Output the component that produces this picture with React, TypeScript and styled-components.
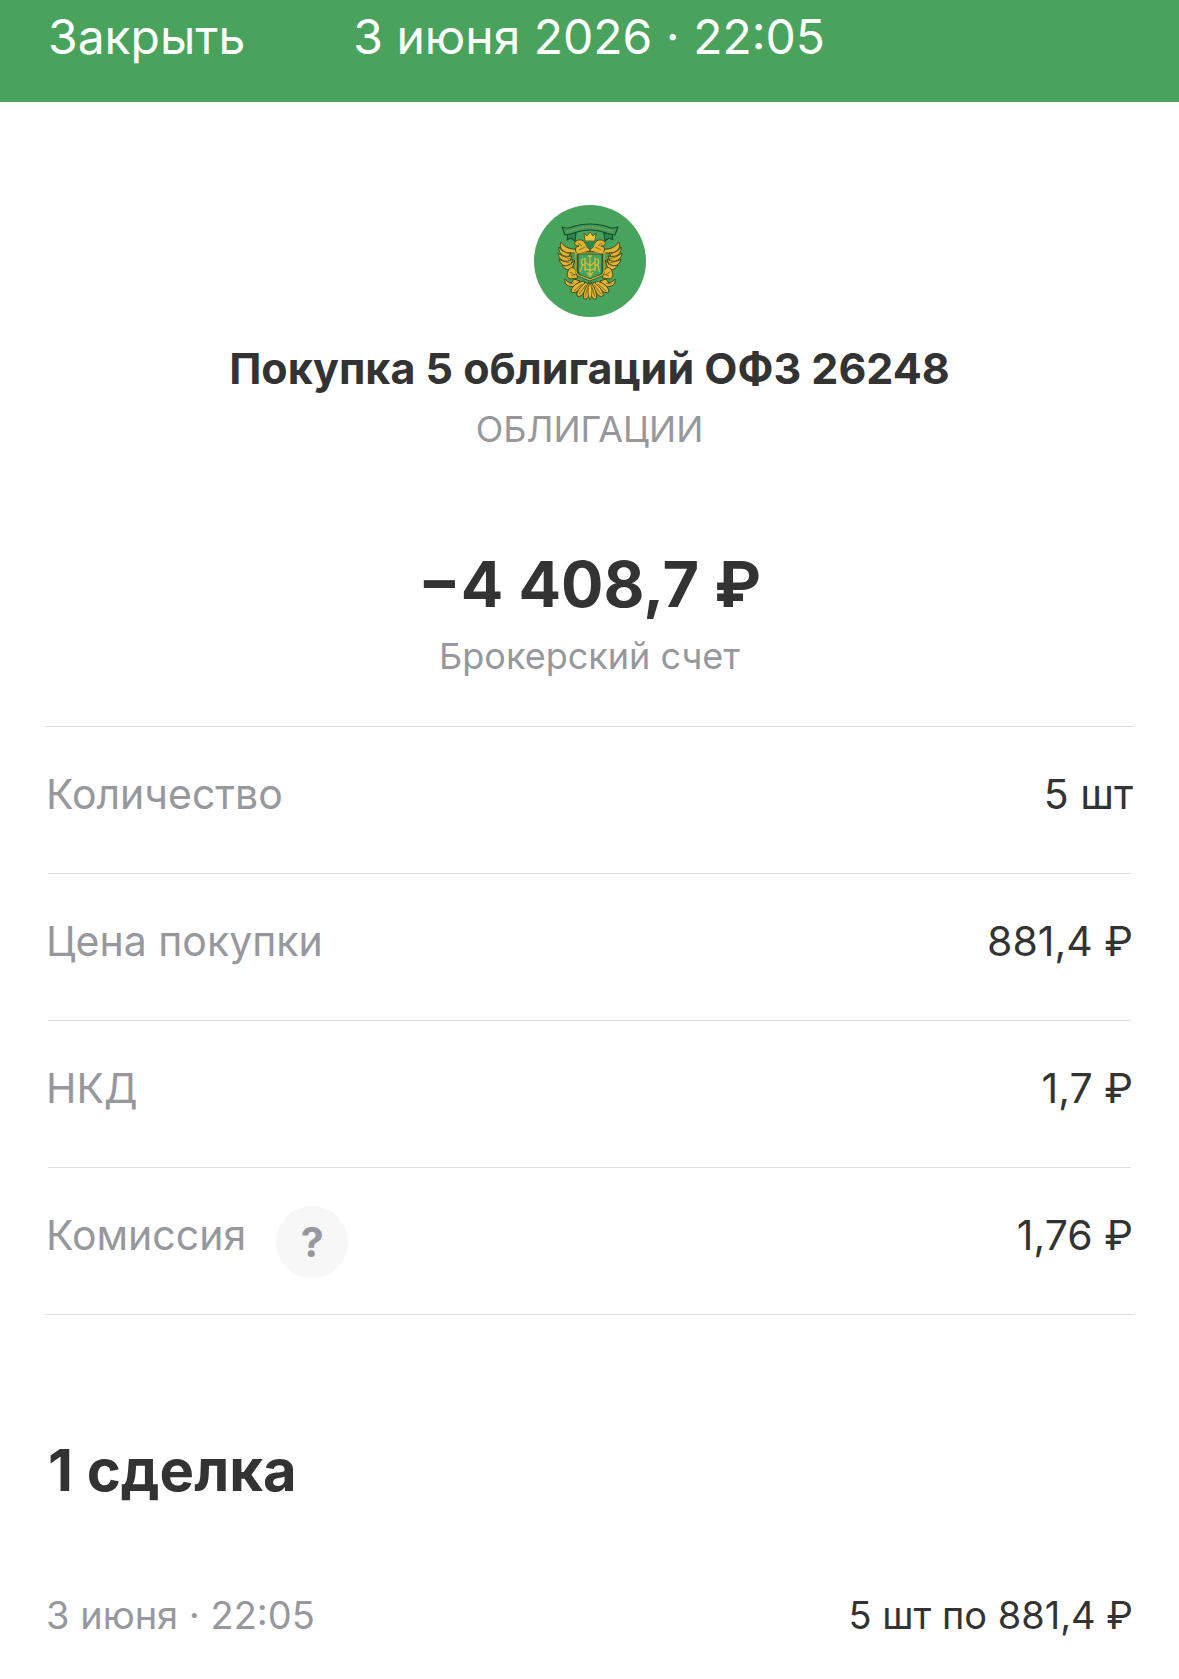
import styled, { createGlobalStyle } from "styled-components";

const details = [
  { name: "Количество", value: "5 шт" },
  { name: "Цена покупки", value: "881,4 ₽" },
  { name: "НКД", value: "1,7 ₽" },
  { name: "Комиссия", value: "1,76 ₽", help: true },
];

// left half of the eagle, mirrored for the right one
const EagleHalf = () => (
  <>
    <g fill="#e3b433" stroke="#3f4a1c" strokeWidth="1" strokeLinejoin="round">
      <path d="M27 37C25 42 28 46 32 48L43 48L43 44C37 45 30 42 27 37Z" />
      <path d="M25 42C24 47 28 51 34 53L37 48C32 48 27 46 25 42Z" />
      <path d="M24 48C24 53 28 56 35 58L38 51C33 52 27 51 24 48Z" />
      <path d="M25 54C26 59 30 62 36 62L39 54C34 57 29 57 25 54Z" />
      <path d="M28 60C30 64 34 66 38 64L41 55C37 60 32 62 28 60Z" />
      <path d="M56 46L44 49C40 46 41 41 45 41C41 41 40 39 41 37C44 34 49 34 51 38C53 40 52 43 56 44Z" />
      <path d="M35 64C38 61 42 63 42 68L44 73L36 74C33 73 32 69 35 64Z" />
      <path d="M31 74C30 79 34 83 41 81L46 76L40 74L37 78C35 77 33 77 31 74Z" />
      <path d="M50 76C43 77 37 82 37 87C41 89 45 86 51 79Z" />
      <path d="M52 77C46 82 42 87 43 91C47 93 50 88 54 80Z" />
      <path d="M55 77C51 83 48 90 50 94C53 95 55 91 56 86Z" />
    </g>
    <g fill="none" stroke="#6b5c1a" strokeWidth="0.8">
      <path d="M29 46L37 50M28 51L36 54M29 56L36 58M32 61L38 59" />
      <path d="M44 38L48 41M45 45L51 42M36 67L41 70M37 71L42 69" />
      <path d="M40 86L48 79M45 89L52 80M51 92L54 82M35 79L40 78" />
    </g>
    <path
      d="M40 48H56M42 48V66C42 71 48 71 56 75"
      fill="none"
      stroke="#dcb136"
      strokeWidth="1.2"
    />
  </>
);

const Emblem = () => (
  <EmblemIcon viewBox="0 0 112 112" role="img" aria-label="ОФЗ 26248">
    <circle cx="56" cy="56" r="56" fill="#48a35c" />
    <path
      d="M43 48H69V66C69 71 64 71 56 75C48 71 43 71 43 66Z"
      fill="#48a35c"
      stroke="#1f5a36"
      strokeWidth="3"
    />
    <EagleHalf />
    <g transform="matrix(-1 0 0 1 112 0)">
      <EagleHalf />
    </g>
    <path
      d="M56 78C53 83 54 91 56 95C58 91 59 83 56 78Z"
      fill="#ecc53f"
      stroke="#4b4a16"
      strokeWidth="0.8"
    />
    <g fill="#2f8750" stroke="#174d30" strokeWidth="1.1" strokeLinejoin="round">
      <path d="M34 28L33 35L37 33L41 36L42 28ZM78 28L79 35L75 33L71 36L70 28Z" />
      <path
        d="M28 22C31 23 34 24 38 22C46 19 50 19 56 19C62 19 66 19 74 22C78 24 81 23 84 22L81 30C77 30 75 29 72 28C66 26 62 25 56 25C50 25 46 26 40 28C37 29 35 30 31 30Z"
        fill="#42985a"
      />
    </g>
    <path
      d="M33 26C38 26 45 22 56 22C67 22 74 26 79 26"
      fill="none"
      stroke="#94ab49"
      strokeWidth="1.2"
      strokeDasharray="1.4 0.9"
    />
    <path d="M51 37H61L60 41L56 44L52 41Z" fill="#2f8750" />
    <path
      d="M50 28L53 31L56 27L59 31L62 28L61 36H51Z"
      fill="#ecc53f"
      stroke="#4b4a16"
      strokeWidth="0.8"
    />
    <g fill="none" stroke="#d6bb3e" strokeWidth="1.3">
      <path d="M56 51V72M51 53V66M61 53V66M54 51H58M53 67L56 71L59 67" />
      <path d="M51 54C46 53 46 60 51 60M61 54C66 53 66 60 61 60" />
      <path d="M49 60C46 62 48 66 46 67M63 60C66 62 64 66 66 67" />
      <path d="M51 62C52 66 60 66 61 62M51 57L56 61L61 57" />
    </g>
  </EmblemIcon>
);

const App = () => {
  return (
    <>
      <GlobalStyle />
      <Header>
        <CloseButton type="button">Закрыть</CloseButton>
        <HeaderTitle>3 июня 2026 · 22:05</HeaderTitle>
      </Header>
      <Main>
        <Summary>
          <Emblem />
          <Title>Покупка 5 облигаций ОФЗ 26248</Title>
          <Category>ОБЛИГАЦИИ</Category>
          <Amount>−4 408,7 ₽</Amount>
          <Account>Брокерский счет</Account>
        </Summary>
        <DetailList>
          {details.map((item) => (
            <DetailRow key={item.name}>
              <DetailName>
                {item.name}
                {item.help && (
                  <HelpButton type="button" aria-label="Подробнее о комиссии">
                    ?
                  </HelpButton>
                )}
              </DetailName>
              <DetailValue>{item.value}</DetailValue>
            </DetailRow>
          ))}
        </DetailList>
        <DealsTitle>1 сделка</DealsTitle>
        <DealRow>
          <DealDate>3 июня · 22:05</DealDate>
          <DealText>5 шт по 881,4 ₽</DealText>
        </DealRow>
      </Main>
    </>
  );
};

export default App;

const GlobalStyle = createGlobalStyle`
  * {
    box-sizing: border-box;
    margin: 0;
    padding: 0;
  }

  body {
    background: #fff;
    color: #333;
    font-family: Inter, "Liberation Sans", sans-serif;
  }
`;

const Header = styled.header`
  display: flex;
  align-items: center;
  gap: 108px;
  padding: 3px 48px 31px;
  background: #4aa35c;
  color: #fff;
`;

const CloseButton = styled.button`
  border: none;
  background: none;
  color: inherit;
  font-family: inherit;
  font-size: 48px;
  line-height: 68px;
  cursor: pointer;
`;

const HeaderTitle = styled.h1`
  font-size: 48px;
  font-weight: 400;
  line-height: 68px;
`;

const Main = styled.main`
  padding: 103px 45px 24px;
`;

const Summary = styled.section`
  display: flex;
  flex-direction: column;
  align-items: center;
  padding-bottom: 46px;
  text-align: center;
`;

const EmblemIcon = styled.svg`
  width: 112px;
  height: 112px;
`;

const Title = styled.h2`
  margin-top: 23px;
  font-size: 43px;
  font-weight: 700;
  line-height: 56px;
`;

const Category = styled.p`
  margin-top: 9px;
  color: #96989e;
  font-size: 36px;
  line-height: 48px;
`;

const Amount = styled.p`
  margin-top: 91px;
  font-size: 63px;
  font-weight: 700;
  line-height: 80px;
`;

const Account = styled.p`
  margin-top: 8px;
  color: #96989e;
  font-size: 36px;
  line-height: 48px;
`;

const DetailList = styled.dl`
  border-top: 1px solid #dedfe1;
`;

const DetailRow = styled.div`
  display: grid;
  grid-template-columns: 1fr auto;
  padding: 38px 1px 0;

  &::after {
    content: "";
    grid-column: 1 / -1;
    height: 1px;
    margin: 36px 2px 0;
    background: #dedfe1;
  }

  &:last-child::after {
    margin: 36px -1px 0;
  }
`;

const DetailName = styled.dt`
  display: flex;
  gap: 30px;
  min-height: 72px;
  color: #96989e;
  font-size: 41px;
  line-height: 58px;
`;

const DetailValue = styled.dd`
  font-size: 41px;
  line-height: 58px;
`;

const HelpButton = styled.button`
  width: 72px;
  height: 72px;
  border: none;
  border-radius: 50%;
  background: #f7f7f8;
  color: #96989e;
  font-family: inherit;
  font-size: 41px;
  font-weight: 700;
  cursor: pointer;
`;

const DealsTitle = styled.h2`
  margin: 115px 3px 0;
  font-size: 58px;
  font-weight: 700;
  line-height: 80px;
`;

const DealRow = styled.div`
  display: flex;
  justify-content: space-between;
  margin: 77px 1px 0;
  font-size: 38px;
  line-height: 56px;
`;

const DealDate = styled.time`
  color: #96989e;
`;

const DealText = styled.p``;
